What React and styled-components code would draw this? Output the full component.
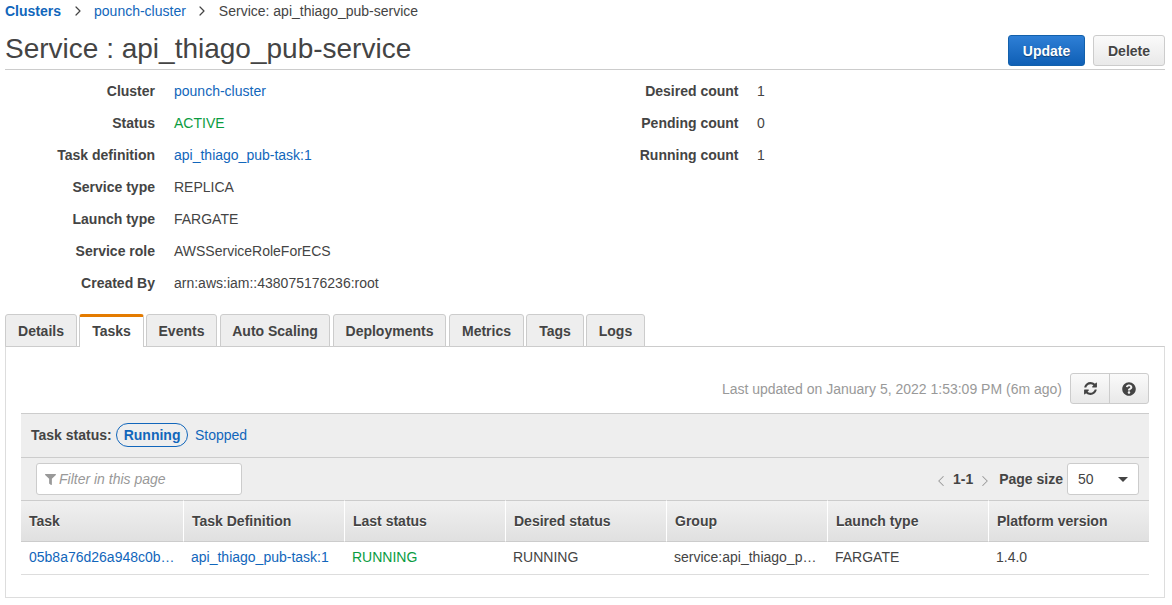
import React from "react";
import styled, { createGlobalStyle } from "styled-components";
import { ChevronRight, ChevronLeft } from "lucide-react";
import { FaFilter, FaQuestionCircle } from "react-icons/fa";

const GlobalStyle = createGlobalStyle`
  html, body { margin: 0; padding: 0; background: #fff; }
  body {
    font-family: "Liberation Sans", Arial, sans-serif;
    font-size: 14px;
    color: #444;
  }
`;

const Page = styled.div`
  width: 1172px;
  height: 605px;
  overflow: hidden;
  box-sizing: border-box;
  padding: 0 7px 0 5px;
`;

const Crumbs = styled.div`
  display: flex;
  align-items: center;
  height: 22px;
  line-height: 22px;
  svg { color: #444; margin: 0 8.5px 0 8.5px; }
`;

const A = styled.a`
  color: #1166bb;
  font-weight: ${(p) => (p.$bold ? 700 : 400)};
  cursor: pointer;
`;

const TitleBar = styled.div`
  display: flex;
  justify-content: space-between;
  align-items: center;
  height: 47px;
  border-bottom: 1px solid #ccc;
`;

const Title = styled.h1`
  margin: 6px 0 0;
  font-size: 28px;
  font-weight: 400;
  color: #444;
  line-height: 34px;
`;

const Actions = styled.div`
  display: flex;
  gap: 8px;
  margin-top: 10px;
`;

const Btn = styled.button`
  height: 31px;
  box-sizing: border-box;
  font: 700 14px "Liberation Sans", Arial, sans-serif;
  border-radius: 3px;
  padding: 0;
  width: ${(p) => p.$w}px;
  color: ${(p) => (p.$primary ? "#fff" : "#444")};
  border: 1px solid ${(p) => (p.$primary ? "#1260ab" : "#ccc")};
  background: ${(p) =>
    p.$primary
      ? "linear-gradient(#2e7fd6, #0f5fb5)"
      : "linear-gradient(#fafafa, #e9e9e9)"};
  text-shadow: ${(p) => (p.$primary ? "0 1px 1px rgba(0,0,0,.4)" : "0 1px 0 #fff")};
`;

const Details = styled.div`
  display: flex;
  padding-top: 5px;
  height: 239px;
`;

const DetailCol = styled.div`
  width: ${(p) => p.$w}px;
`;

const DetailRow = styled.div`
  display: grid;
  grid-template-columns: ${(p) => p.$label}px 1fr;
  column-gap: ${(p) => p.$gap}px;
  height: 32px;
  align-items: center;
`;

const Label = styled.div`
  text-align: right;
  font-weight: 700;
`;

const Active = styled.span`
  color: #0a9c3f;
`;

const Tabs = styled.div`
  display: flex;
  height: 33px;
  gap: 2px;
  margin-bottom: -1px;
  position: relative;
  z-index: 1;
`;

const Tab = styled.div`
  box-sizing: border-box;
  width: ${(p) => p.$w}px;
  margin-right: ${(p) => p.$mr || 0}px;
  height: 33px;
  padding-bottom: ${(p) => (p.$active ? 3 : 0)}px;
  display: flex;
  align-items: center;
  justify-content: center;
  font-weight: 700;
  border: 1px solid #ccc;
  border-bottom: ${(p) => (p.$active ? "none" : "1px solid #ccc")};
  border-top: ${(p) => (p.$active ? "3px solid #e47b00" : "1px solid #ccc")};
  border-radius: 3px 3px 0 0;
  background: ${(p) => (p.$active ? "#fff" : "#eee")};
`;

const Panel = styled.div`
  box-sizing: border-box;
  height: 252px;
  border: 1px solid #ddd;
  border-top-color: #ccc;
  padding: 26px 15px 0;
`;

const UpdatedBar = styled.div`
  display: flex;
  justify-content: flex-end;
  align-items: center;
  gap: 8px;
  height: 31px;
  margin-bottom: 9px;
`;

const Updated = styled.span`
  color: #999;
`;

const BtnGroup = styled.div`
  display: flex;
  height: 31px;
  box-sizing: border-box;
  border: 1px solid #ccc;
  border-radius: 3px;
  background: linear-gradient(#fafafa, #e9e9e9);
`;

const IconBtn = styled.div`
  width: ${(p) => p.$w}px;
  display: flex;
  align-items: center;
  justify-content: center;
  color: #444;
  & + & { border-left: 1px solid #ccc; }
`;

const StatusRow = styled.div`
  display: flex;
  align-items: center;
  height: 45px;
  box-sizing: border-box;
  background: #eee;
  border-top: 1px solid #ccc;
  border-bottom: 1px solid #ccc;
  padding: 0 10px 2px;
`;

const StatusLabel = styled.span`
  font-weight: 700;
  margin-right: 4px;
  margin-top: 1px;
`;

const Pill = styled.span`
  box-sizing: border-box;
  height: 24px;
  line-height: 22px;
  padding: 0 7px;
  border: 1px solid #1166bb;
  border-radius: 12px;
  font-weight: 700;
  color: #1166bb;
  margin-right: 6.5px;
`;

const FilterRow = styled.div`
  display: flex;
  align-items: center;
  justify-content: space-between;
  height: 42px;
  box-sizing: border-box;
  background: #eee;
  padding: 0 10px 0 15px;
`;

const FilterBox = styled.div`
  box-sizing: border-box;
  width: 206px;
  height: 32px;
  display: flex;
  align-items: center;
  gap: 3px;
  padding-left: 8px;
  background: #fff;
  border: 1px solid #ccc;
  border-radius: 3px;
  font-style: italic;
  color: #999;
  svg { color: #999; }
`;

const Pager = styled.div`
  display: flex;
  align-items: center;
  font-weight: 700;
`;

const PagerArrow = styled.span`
  display: flex;
  color: #999;
  margin: ${(p) => p.$m};
`;

const SizeSelect = styled.div`
  box-sizing: border-box;
  width: 72px;
  height: 32px;
  margin-left: 4px;
  display: flex;
  align-items: center;
  justify-content: space-between;
  padding: 0 10px;
  background: #fff;
  border: 1px solid #ccc;
  border-radius: 3px;
  font-weight: 400;
`;

const Caret = styled.span`
  width: 0;
  height: 0;
  border-left: 5px solid transparent;
  border-right: 5px solid transparent;
  border-top: 5px solid #444;
`;

const Table = styled.div`
  display: grid;
  grid-template-columns: 162px repeat(6, 161px);
`;

const Th = styled.div`
  box-sizing: border-box;
  height: 42px;
  display: flex;
  align-items: center;
  padding-left: 8px;
  font-weight: 700;
  background: linear-gradient(#f0f0f0, #e0e0e0);
  border-top: 1px solid #ccc;
  border-bottom: 1px solid #ccc;
  border-left: ${(p) => (p.$first ? "none" : "1px solid #fff")};
  text-shadow: 0 1px 0 #fff;
`;

const Td = styled.div`
  box-sizing: border-box;
  height: 33px;
  line-height: 31px;
  padding-left: 8px;
  border-bottom: 1px solid #ddd;
  white-space: nowrap;
`;

const Running = styled.span`
  color: #0a9c3f;
`;

const RefreshIcon = () => (
  <svg width="15" height="15" viewBox="0 0 1792 1792" fill="currentColor">
    <path d="M1639 1056q0 5-1 7-64 268-268 434.5t-478 166.5q-146 0-282.5-55t-243.5-157l-129 129q-19 19-45 19t-45-19-19-45v-448q0-26 19-45t45-19h448q26 0 45 19t19 45-19 45l-137 137q71 66 161 102t187 36q134 0 250-65t186-179q11-17 53-117 8-23 30-23h192q13 0 22.5 9.5t9.5 22.5zm25-800v448q0 26-19 45t-45 19h-448q-26 0-45-19t-19-45 19-45l138-138q-148-137-349-137-134 0-250 65t-186 179q-11 17-53 117-8 23-30 23h-199q-13 0-22.5-9.5t-9.5-22.5v-7q65-268 270-434.5t480-166.5q146 0 284 55.5t245 156.5l130-129q19-19 45-19t45 19 19 45z" />
  </svg>
);

const leftDetails = [
  ["Cluster", <A key="c">pounch-cluster</A>],
  ["Status", <Active key="s">ACTIVE</Active>],
  ["Task definition", <A key="t">api_thiago_pub-task:1</A>],
  ["Service type", "REPLICA"],
  ["Launch type", "FARGATE"],
  ["Service role", "AWSServiceRoleForECS"],
  ["Created By", "arn:aws:iam::438075176236:root"],
];

const rightDetails = [
  ["Desired count", "1"],
  ["Pending count", "0"],
  ["Running count", "1"],
];

const tabs = [
  { name: "Details", w: 72 },
  { name: "Tasks", w: 65, active: true },
  { name: "Events", w: 71, mr: 1 },
  { name: "Auto Scaling", w: 110, mr: 1 },
  { name: "Deployments", w: 113, mr: 1 },
  { name: "Metrics", w: 75 },
  { name: "Tags", w: 58 },
  { name: "Logs", w: 59 },
];

const columns = [
  "Task",
  "Task Definition",
  "Last status",
  "Desired status",
  "Group",
  "Launch type",
  "Platform version",
];

export default function App() {
  return (
    <Page>
      <GlobalStyle />
      <Crumbs>
        <A $bold>Clusters</A>
        <ChevronRight size={16} strokeWidth={1.8} />
        <A>pounch-cluster</A>
        <ChevronRight size={16} strokeWidth={1.8} />
        <span>Service: api_thiago_pub-service</span>
      </Crumbs>
      <TitleBar>
        <Title>Service : api_thiago_pub-service</Title>
        <Actions>
          <Btn $primary $w={77}>Update</Btn>
          <Btn $w={72}>Delete</Btn>
        </Actions>
      </TitleBar>
      <Details>
        <DetailCol $w={560}>
          {leftDetails.map(([k, v]) => (
            <DetailRow key={k} $label={150} $gap={19}>
              <Label>{k}</Label>
              <div>{v}</div>
            </DetailRow>
          ))}
        </DetailCol>
        <DetailCol $w={300}>
          {rightDetails.map(([k, v]) => (
            <DetailRow key={k} $label={173.5} $gap={18.5}>
              <Label>{k}</Label>
              <div>{v}</div>
            </DetailRow>
          ))}
        </DetailCol>
      </Details>
      <Tabs>
        {tabs.map((t) => (
          <Tab key={t.name} $w={t.w} $mr={t.mr} $active={t.active}>
            {t.name}
          </Tab>
        ))}
      </Tabs>
      <Panel>
        <UpdatedBar>
          <Updated>Last updated on January 5, 2022 1:53:09 PM (6m ago)</Updated>
          <BtnGroup>
            <IconBtn $w={38}><RefreshIcon /></IconBtn>
            <IconBtn $w={38}><FaQuestionCircle size={14} /></IconBtn>
          </BtnGroup>
        </UpdatedBar>
        <StatusRow>
          <StatusLabel>Task status:</StatusLabel>
          <Pill>Running</Pill>
          <A>Stopped</A>
        </StatusRow>
        <FilterRow>
          <FilterBox>
            <FaFilter size={11} />
            Filter in this page
          </FilterBox>
          <Pager>
            <PagerArrow $m="3px 3px 0 -2px"><ChevronLeft size={18} strokeWidth={1.4} /></PagerArrow>
            1-1
            <PagerArrow $m="3px 5px 0 3px"><ChevronRight size={18} strokeWidth={1.4} /></PagerArrow>
            Page size
            <SizeSelect>50<Caret /></SizeSelect>
          </Pager>
        </FilterRow>
        <Table>
          {columns.map((c, i) => (
            <Th key={c} $first={i === 0}>{c}</Th>
          ))}
          <Td><A>05b8a76d26a948c0b…</A></Td>
          <Td><A>api_thiago_pub-task:1</A></Td>
          <Td><Running>RUNNING</Running></Td>
          <Td>RUNNING</Td>
          <Td>service:api_thiago_p…</Td>
          <Td>FARGATE</Td>
          <Td>1.4.0</Td>
        </Table>
      </Panel>
    </Page>
  );
}
